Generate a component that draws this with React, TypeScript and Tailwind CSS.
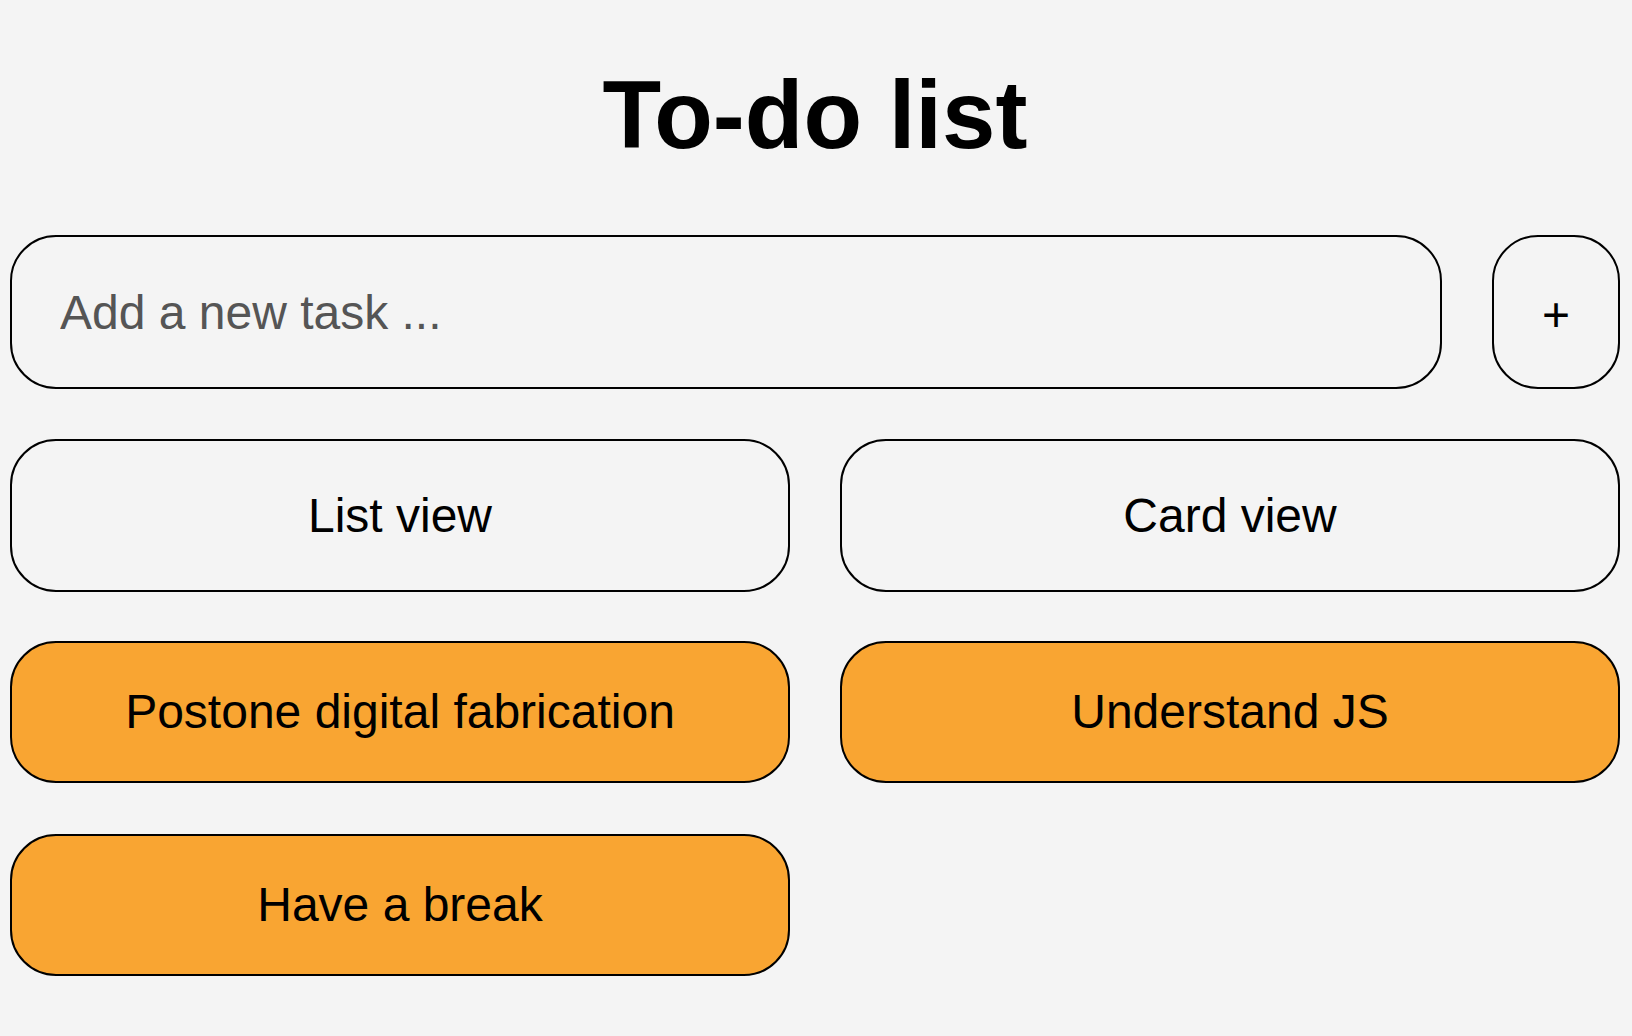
import React from "react";

export default function App() {
  const font = { fontFamily: '"Liberation Sans", Arial, Helvetica, sans-serif' };
  return (
    <div className="min-h-[1036px] w-full bg-[#f4f4f4] text-black" style={font}>
      <div className="ml-[10px] mr-[12px] pt-[67px]">
        <h1 className="text-center text-[96px] font-bold leading-none mb-[72px]">To-do list</h1>
        <div className="flex gap-[50px] h-[154px]">
          <input
            className="flex-1 h-full rounded-[46px] border-2 border-black bg-transparent pl-[48px] text-[48px] text-black placeholder:text-[#555555] outline-none"
            placeholder="Add a new task ..."
            style={font}
          />
          <button
            className="w-[128px] h-full rounded-[46px] border-2 border-black bg-transparent text-[48px] leading-none pt-[6px]"
            style={font}
          >
            +
          </button>
        </div>
        <div className="grid grid-cols-2 gap-x-[50px] mt-[50px]">
          <button className="h-[153px] rounded-[46px] border-2 border-black bg-transparent text-[48px]" style={font}>
            List view
          </button>
          <button className="h-[153px] rounded-[46px] border-2 border-black bg-transparent text-[48px]" style={font}>
            Card view
          </button>
        </div>
        <div className="grid grid-cols-2 gap-x-[50px] gap-y-[51px] mt-[49px]">
          {["Postone digital fabrication", "Understand JS", "Have a break"].map((t) => (
            <div
              key={t}
              className="h-[142px] rounded-[46px] border-2 border-black bg-[#f9a532] text-[48px] flex items-center justify-center"
            >
              {t}
            </div>
          ))}
        </div>
      </div>
    </div>
  );
}
